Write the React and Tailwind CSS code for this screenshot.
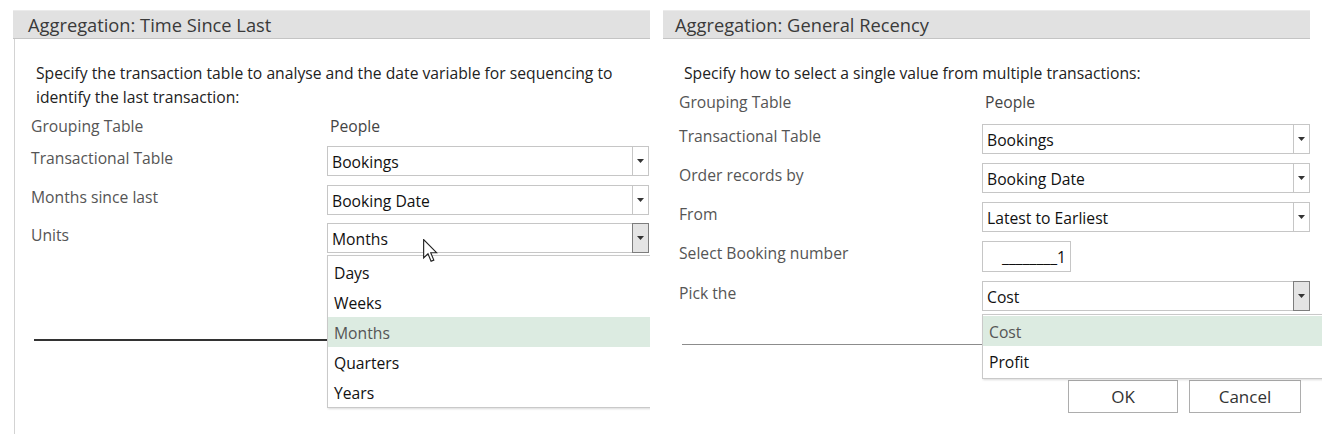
import React from "react";

const FONT = { fontFamily: '"Open Sans", "Noto Sans", Arial, sans-serif' };

function Arrow() {
  return (
    <svg width="7" height="4" viewBox="0 0 7 4" className="block">
      <path d="M0 0 H7 L3.5 4 Z" fill="#333" />
    </svg>
  );
}

function Select({ value, width, active }) {
  return (
    <div className={`flex h-[30px] border border-[#c6c6c6] bg-white ${width}`}>
      <div className="flex-1 flex items-center pl-[4px] pt-[3px] text-[15.7px] text-[#111] leading-none">
        {value}
      </div>
      {active ? (
        <div className="w-[17px] -my-px -mr-px bg-[#e4e4e4] border border-[#7d7d7d] flex items-center justify-center">
          <Arrow />
        </div>
      ) : (
        <div className="w-[16px] border-l border-[#c6c6c6] flex items-center justify-center">
          <Arrow />
        </div>
      )}
    </div>
  );
}

function Cursor() {
  return (
    <svg width="15" height="24" viewBox="0 0 13 21" className="block">
      <path
        d="M0.5 0.5 L0.5 16.5 L4.3 12.9 L7 19.5 L9.4 18.5 L6.7 12 L11.8 12 Z"
        fill="#fff"
        stroke="#222"
        strokeWidth="1"
        strokeLinejoin="miter"
      />
    </svg>
  );
}

function TitleBar({ text, pl, width }) {
  return (
    <div
      className={`h-[29px] bg-[#e1e1e1] border-t border-[#ebebeb] border-b border-b-[#c4c4c4] flex items-center pt-[2px] ${pl} ${width}`}
    >
      <span className="text-[18.3px] text-[#3a3a3a] leading-none">{text}</span>
    </div>
  );
}

function Row({ label, labelW, mt, children }) {
  return (
    <div className={`flex text-[15.7px] text-[#555] ${mt}`}>
      <div className={`pl-[16px] leading-[24px] ${labelW}`}>{label}</div>
      {children}
    </div>
  );
}

function DropList({ items, selected, className }) {
  return (
    <div
      className={`absolute bg-white border border-[#c9c9c9] shadow-[1px_1px_2px_rgba(0,0,0,0.15)] text-[15.7px] text-[#111] ${className}`}
    >
      {items.map((it) => (
        <div
          key={it}
          className={`h-[30px] flex items-center pl-[6px] pt-[3px] leading-none ${
            it === selected ? "bg-[#dcebe1] text-[#555]" : ""
          }`}
        >
          {it}
        </div>
      ))}
    </div>
  );
}

export default function App() {
  return (
    <div
      className="w-[1322px] h-[434px] bg-white flex pt-[10px] overflow-hidden"
      style={FONT}
    >
      {/* Left dialog */}
      <div className="ml-[13px] w-[637px] h-[424px] overflow-hidden flex flex-col">
        <TitleBar text="Aggregation: Time Since Last" pl="pl-[15px]" width="w-full" />
        <div className="relative flex-1 ml-[1px] border-l border-[#d3d3d3]">
          <div className="pt-[22px] pl-[21px] text-[15.7px] leading-[24px] text-[#222]">
            Specify the transaction table to analyse and the date variable for sequencing to
            <br />
            identify the last transaction:
          </div>
          <div className="mt-[6px] flex h-[24px] items-center text-[15.7px] text-[#555]">
            <div className="pl-[16px] w-[315px]">Grouping Table</div>
            <div className="text-[#444]">People</div>
          </div>
          <Row label="Transactional Table" labelW="w-[312px]" mt="mt-[7px]">
            <Select value="Bookings" width="w-[322px]" />
          </Row>
          <Row label="Months since last" labelW="w-[312px]" mt="mt-[9px]">
            <Select value="Booking Date" width="w-[322px]" />
          </Row>
          <Row label="Units" labelW="w-[312px]" mt="mt-[8px]">
            <Select value="Months" width="w-[322px]" active />
          </Row>
          <div className="mt-[86px] ml-[19px] h-[1.5px] w-[400px] bg-[#333]" />

          <DropList
            items={["Days", "Weeks", "Months", "Quarters", "Years"]}
            selected="Months"
            className="left-[312px] top-[216px] w-[330px] pt-px"
          />

          {/* Mouse cursor */}
          <div className="absolute left-[408px] top-[200px]">
            <Cursor />
          </div>
        </div>
      </div>

      {/* Right dialog */}
      <div className="ml-[13px] w-[659px] h-[424px] flex flex-col">
        <TitleBar text="Aggregation: General Recency" pl="pl-[12px]" width="w-[647px]" />
        <div className="relative flex-1">
          <div className="pt-[22px] pl-[21px] text-[15.7px] leading-[24px] text-[#222]">
            Specify how to select a single value from multiple transactions:
          </div>
          <div className="mt-[6px] flex h-[24px] items-center text-[15.7px] text-[#555]">
            <div className="pl-[16px] w-[322px]">Grouping Table</div>
            <div className="text-[#444]">People</div>
          </div>
          <Row label="Transactional Table" labelW="w-[319px]" mt="mt-[9px]">
            <Select value="Bookings" width="w-[328px]" />
          </Row>
          <Row label="Order records by" labelW="w-[319px]" mt="mt-[9px]">
            <Select value="Booking Date" width="w-[328px]" />
          </Row>
          <Row label="From" labelW="w-[319px]" mt="mt-[9px]">
            <Select value="Latest to Earliest" width="w-[328px]" />
          </Row>
          <Row label="Select Booking number" labelW="w-[319px]" mt="mt-[9px]">
            <div className="w-[89px] h-[31px] border border-[#c6c6c6] flex items-center justify-end pr-[4px] pt-[3px] leading-none text-[15.7px] text-[#111]">
              ________1
            </div>
          </Row>
          <Row label="Pick the" labelW="w-[319px]" mt="mt-[9px]">
            <Select value="Cost" width="w-[328px]" active />
          </Row>
          <div className="mt-[33px] ml-[19px] h-px w-[320px] bg-[#8c8c8c]" />
          <div className="mt-[35px] ml-[405px] flex gap-[11px]">
            <button className="w-[110px] h-[33px] border border-[#adadad] bg-white text-[17px] leading-none text-[#333]">
              OK
            </button>
            <button className="w-[112px] h-[33px] border border-[#adadad] bg-white text-[17px] leading-none text-[#333]">
              Cancel
            </button>
          </div>

          <DropList
            items={["Cost", "Profit"]}
            selected="Cost"
            className="left-[319px] top-[275px] w-[345px] pt-px pb-[2px]"
          />
        </div>
      </div>
    </div>
  );
}
